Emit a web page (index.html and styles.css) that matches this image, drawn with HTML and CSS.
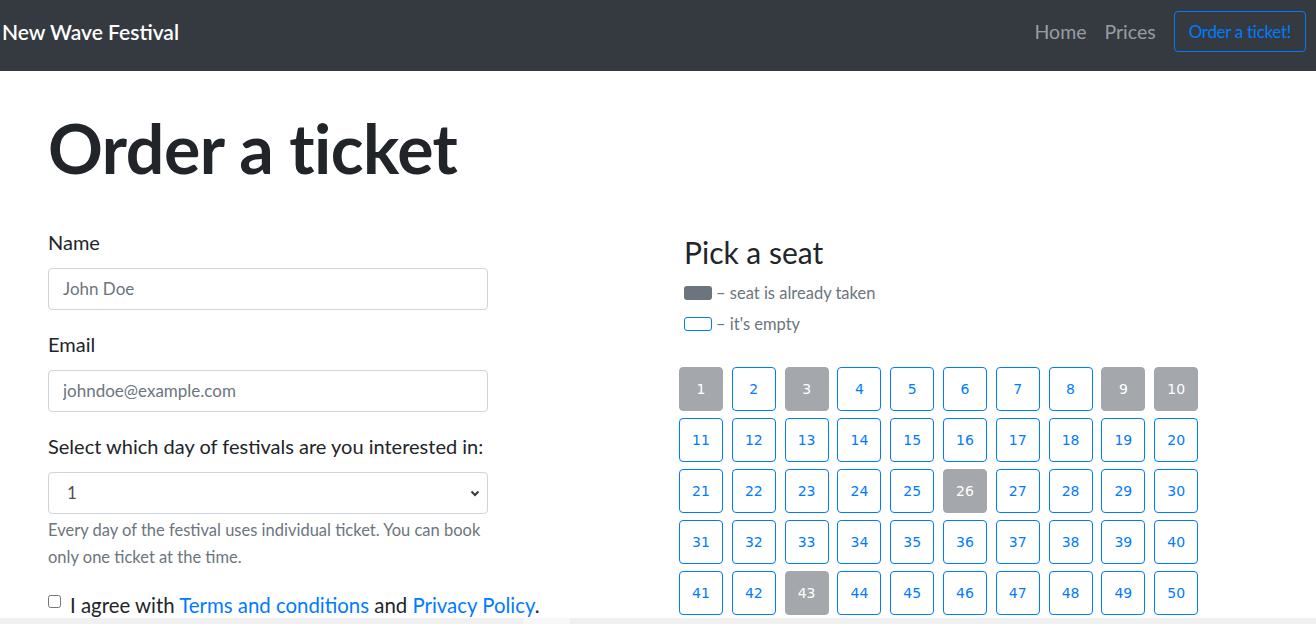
FILE: index.html
```html
<!DOCTYPE html>
<html lang="en">
<head>
<meta charset="utf-8">
<title>New Wave Festival</title>
<link rel="stylesheet" href="styles.css">
</head>
<body>
<nav class="navbar">
  <a class="brand" href="#">New Wave Festival</a>
  <div class="nav-links">
    <a class="nav-link" href="#">Home</a>
    <a class="nav-link" href="#">Prices</a>
    <a class="btn-order" href="#">Order a ticket!</a>
  </div>
</nav>
<main class="container">
  <h1 class="title">Order a ticket</h1>
  <div class="row">
    <form class="order-form">
      <div class="form-group">
        <label class="form-label" for="name">Name</label>
        <input class="form-control" id="name" type="text" placeholder="John Doe">
      </div>
      <div class="form-group">
        <label class="form-label" for="email">Email</label>
        <input class="form-control" id="email" type="email" placeholder="johndoe@example.com">
      </div>
      <div class="form-group">
        <label class="form-label" for="day">Select which day of festivals are you interested in:</label>
        <div class="select-wrap">
          <select class="form-control select" id="day">
            <option>1</option>
            <option>2</option>
            <option>3</option>
          </select>
          <svg class="select-arrow" width="10" height="8" viewBox="0 0 10 8"><path d="M1.5 2.5 L5 6 L8.5 2.5" fill="none" stroke="#343a40" stroke-width="2"/></svg>
        </div>
        <small class="help">Every day of the festival uses individual ticket. You can book only one ticket at the time.</small>
      </div>
      <div class="check">
        <input class="check-input" type="checkbox" id="agree">
        <label class="check-label" for="agree">I agree with <a href="#">Terms and conditions</a> and <a href="#">Privacy Policy</a>.</label>
      </div>
    </form>
    <section class="seats">
      <h2 class="seats-title">Pick a seat</h2>
      <div class="legend"><span class="swatch swatch-taken"></span> – seat is already taken</div>
      <div class="legend"><span class="swatch swatch-empty"></span> – it's empty</div>
      <div class="seat-grid" id="grid"></div>
    </section>
  </div>
</main>
<div class="hscroll"><span class="hscroll-thumb"></span></div>
<script>
  var taken = [1, 3, 9, 10, 26, 43];
  var grid = document.getElementById('grid');
  for (var i = 1; i <= 50; i++) {
    var b = document.createElement('button');
    b.type = 'button';
    b.textContent = i;
    b.className = 'seat' + (taken.indexOf(i) > -1 ? ' seat-taken' : '');
    grid.appendChild(b);
  }
</script>
</body>
</html>
```
FILE: styles.css
```css
* { box-sizing: border-box; }
html, body { margin: 0; padding: 0; }
body {
  font-family: Lato, "Noto Sans", sans-serif;
  color: #212529;
  background: #fff;
  overflow: hidden;
  height: 624px;
}
a { color: #007bff; text-decoration: none; }

.navbar {
  height: 71px;
  background: #343a40;
  display: flex;
  align-items: center;
  justify-content: space-between;
  padding: 0 10px 8px 2px;
}
.brand {
  color: #fff;
  font-size: 21px;
  font-weight: 600;
}
.nav-links {
  display: flex;
  align-items: center;
}
.nav-link {
  color: rgba(255,255,255,.5);
  font-size: 19.5px;
  margin-right: 18px;
}
.btn-order {
  display: inline-flex;
  align-items: center;
  height: 41px;
  padding: 0 14px;
  border: 1px solid #007bff;
  border-radius: 4px;
  color: #007bff;
  font-size: 17px;
  letter-spacing: -0.3px;
}

.container { padding: 0 48px; }
.title {
  font-size: 68px;
  font-weight: 700;
  margin: 40px 0 44px;
  line-height: 1.1;
  letter-spacing: -0.5px;
}
.row {
  display: grid;
  grid-template-columns: 631px 1fr;
}
.order-form { width: 600px; }
.form-group { margin-bottom: 22px; width: 440px; }
.form-label {
  display: block;
  font-size: 20px;
  margin-bottom: 14px;
  line-height: 24px;
}
.form-control {
  display: block;
  width: 100%;
  height: 42px;
  padding: 0 14px;
  border: 1px solid #ced4da;
  border-radius: 4px;
  font-family: inherit;
  font-size: 17px;
  color: #495057;
  background: #fff;
}
.form-control::placeholder { color: #6c757d; opacity: 1; }
.select-wrap { position: relative; }
.select {
  -webkit-appearance: none;
  appearance: none;
  padding-left: 18px;
}
.select-arrow {
  position: absolute;
  right: 8px;
  top: 17px;
  pointer-events: none;
}
.help {
  display: block;
  margin-top: 3px;
  font-size: 16.5px;
  line-height: 27px;
  color: #6c757d;
}
.check {
  display: flex;
  align-items: flex-start;
  white-space: nowrap;
}
.check-input {
  width: 13px;
  height: 13px;
  margin: 2px 9px 0 0;
}
.check-label { font-size: 20.4px; line-height: 24px; }

.seats { padding-top: 4px; }
.seats-title {
  font-size: 30px;
  font-weight: 400;
  margin: 0 0 16px 5px;
  line-height: 1.2;
}
.legend {
  display: flex;
  align-items: center;
  font-size: 16.5px;
  color: #6c757d;
  margin-left: 5px;
  height: 31px;
  margin-top: -8px;
  margin-bottom: 8px;
}
.swatch {
  display: inline-block;
  width: 28px;
  height: 14px;
  border-radius: 3px;
  margin-right: 4px;
}
.swatch-taken { background: #6c757d; }
.swatch-empty { border: 1px solid #007bff; }
.seat-grid {
  display: grid;
  grid-template-columns: repeat(10, 44px);
  column-gap: 8.8px;
  row-gap: 7px;
  margin-top: 27px;
}
.seat {
  width: 44px;
  height: 44px;
  padding: 0;
  border: 1px solid #007bff;
  border-radius: 4px;
  background: #fff;
  color: #007bff;
  font-family: "DejaVu Sans", Verdana, sans-serif;
  font-size: 14px;
}
.seat-taken {
  background: #a4a8ad;
  border-color: #a4a8ad;
  color: #fff;
}

.hscroll {
  position: fixed;
  left: 0;
  right: 0;
  bottom: 0;
  height: 6px;
  background: #f0f0f0;
}
.hscroll-thumb {
  position: absolute;
  left: 523px;
  width: 47px;
  top: 0;
  bottom: 0;
  background: #f7f7f7;
}
```
